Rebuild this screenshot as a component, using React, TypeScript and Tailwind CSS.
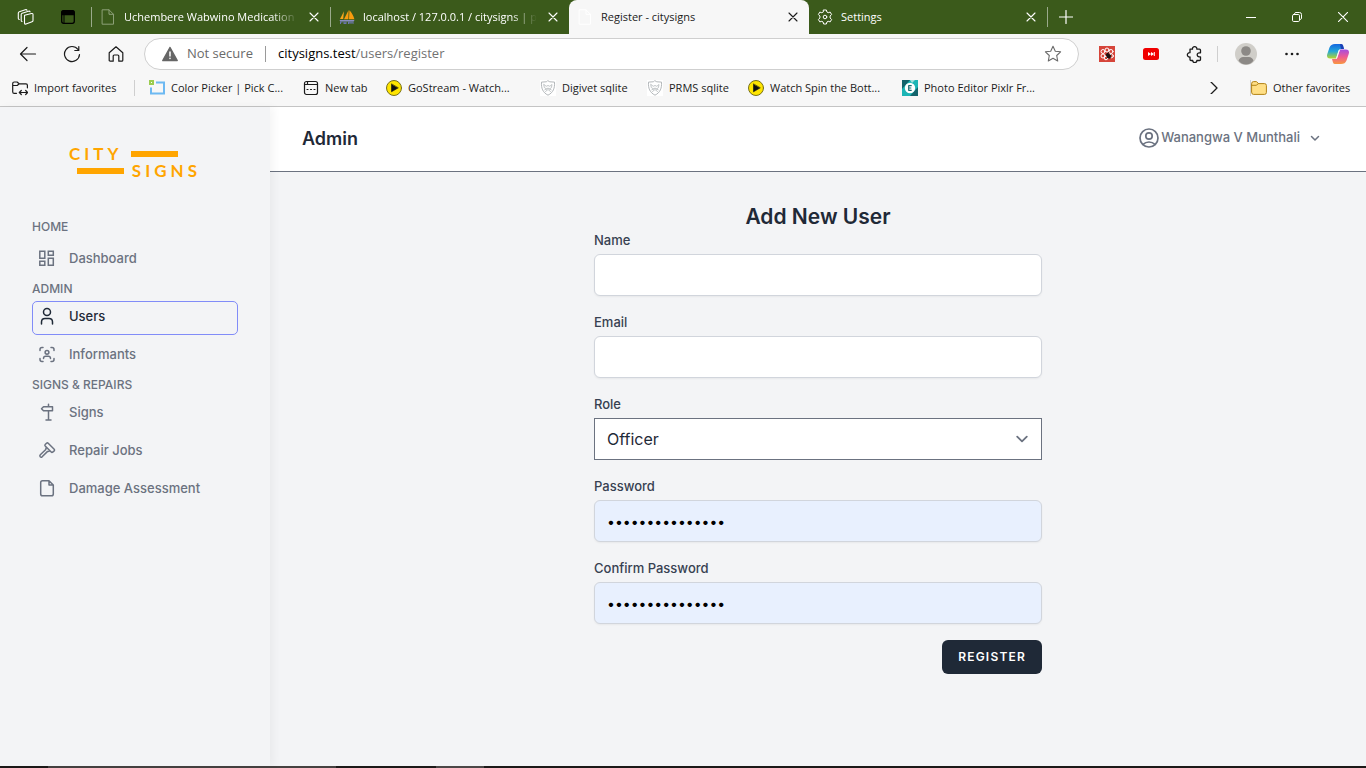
import type { ReactNode } from "react";

function Svg({ size = 20, box = 20, className = "", children }: { size?: number; box?: number; className?: string; children: ReactNode }) {
  return (
    <svg
      width={size}
      height={size}
      viewBox={`0 0 ${box} ${box}`}
      fill="none"
      stroke="currentColor"
      strokeWidth={1.5}
      strokeLinecap="round"
      strokeLinejoin="round"
      aria-hidden="true"
      className={`shrink-0 ${className}`}
    >
      {children}
    </svg>
  );
}

const PageIcon = ({ className = "" }: { className?: string }) => (
  <Svg size={16} box={16} className={className}>
    <path d="M2.5 .8H9l4.5 4.5v9.9h-11zM9 .8v4.5h4.5" strokeWidth="1" />
  </Svg>
);

const CloseIcon = () => (
  <Svg size={10} box={10}>
    <path d="M1 1l8 8M9 1l-8 8" strokeWidth="1.1" />
  </Svg>
);

const SailIcon = () => (
  <Svg size={16} box={16}>
    <g stroke="none">
      <path d="M5 2.2 1 10h3.2z" fill="#f8a51b" />
      <path d="M9.6 1 5 10.3h4.4z" fill="#f89c0e" />
      <path d="M10.4 1.2 10 10.3h5.4c-1-3.800-2.800-7-5-9.100z" fill="#f89c0e" />
      <path d="M.5 11h15l-.8 1.400H1.200z" fill="#8a8fc0" />
      <path d="M1 12.500h2.500v1H2v1.500H1zM4.500 12.500h1v1h1v-1h1v2.500h-3zM9 12.500h5.500v2.500h-1v-1.500h-1V15h-1v-1.500h-1V15H9z" fill="#6c78af" />
    </g>
  </Svg>
);

const GearIcon = () => (
  <Svg size={16} box={16}>
    <path
      d="M6.600 1h2.800l.5 2 1.300.7 2-.6 1.400 2.400-1.500 1.500v2l1.500 1.500-1.400 2.400-2-.6-1.300.7-.5 2H6.600l-.5-2-1.300-.7-2 .6-1.400-2.400L2.900 9V7L1.400 5.500l1.400-2.400 2 .6L6.100 3z"
      strokeWidth="1"
    />
    <circle cx="8" cy="8" r="1.800" strokeWidth="1" />
  </Svg>
);

const PlayIcon = () => (
  <Svg size={16} box={16}>
    <circle cx="8" cy="8" r="7.500" fill="#ffe500" stroke="#77701c" strokeWidth="1" />
    <path d="M5.500 4.200v7.600L12 8z" fill="#111" stroke="#111" strokeWidth=".6" />
  </Svg>
);

const ShieldIcon = () => (
  <Svg size={16} box={16} className="bg-white text-[#b3b7ba]">
    <path d="M8 .8l1.800 1 4.700.3c.4 6-1.200 10.400-6.500 13.100C2.700 12.500 1.100 8.100 1.500 2.100l4.700-.3z" strokeWidth="1" />
    <path d="M4 4.500l2.200 1.800L8 5.500l1.800.8L12 4.500l-.6 3.200L9.500 9 8 8l-1.500 1-1.900-1.300zM5.500 11.500L8 9.500l2.500 2M4.800 9.800l2-1M11.200 9.800l-2-1" strokeWidth=".8" />
  </Svg>
);

function Tab({ icon, title, active, fade }: { icon: ReactNode; title: string; active?: boolean; fade?: boolean }) {
  return (
    <div
      className={
        active
          ? "flex h-full w-60 items-center gap-2 rounded-t-lg bg-[#f7f7f7] px-2 text-[#1b1b1b]"
          : "flex h-full w-[238px] items-center gap-2 px-2 text-white"
      }
    >
      {icon}
      <span className={fade ? "min-w-0 flex-1 whitespace-nowrap [mask-image:linear-gradient(to_right,black_85%,transparent)]" : "min-w-0 flex-1 whitespace-nowrap"}>
        {title}
      </span>
      <button type="button" aria-label={`Close ${title}`} className="flex size-4 items-center justify-center">
        <CloseIcon />
      </button>
    </div>
  );
}

const Divider = () => <span className="h-5 w-px shrink-0 bg-[#9aaa8b]" />;

function TitleBar() {
  const control = "flex h-full w-[46px] items-center justify-center";
  return (
    <div className="flex h-[34px] items-center bg-[#3b5a1b] text-[11px] text-white">
      <div className="flex flex-1 items-center self-stretch">
        <div className="flex w-[91px] items-center pl-[5px]">
          <button type="button" aria-label="Workspaces" className="flex w-[42px] justify-center">
            <Svg size={18} box={18}>
              <path d="M7.500 7.300 14.500 5.500q1.500-.3 1.500 1v6q0 1-1 1.300l-6 2.200q-1.500.4-1.500-1zM5 13.500q-.8-.2-.8-1.300V6.500q0-1 1-1.300l6.300-2q1.300-.3 1.600.6M2.300 11.500q-1-.2-1-1.300V5q0-1 1-1.300l6-2q1.300-.3 1.700.6" strokeWidth="1.100" />
            </Svg>
          </button>
          <button type="button" aria-label="Tab actions" className="flex w-[42px] justify-center text-black">
            <Svg size={16} box={16}>
              <rect x="1.700" y="1.700" width="12.600" height="12.600" rx="2" strokeWidth="1.300" />
              <path d="M2 3.200q0-1.200 1.200-1.200h9.600q1.200 0 1.200 1.200V5.500H2z" fill="#000" />
              <path d="M4 5v9" strokeWidth="1" />
            </Svg>
          </button>
        </div>
        <Divider />
        <Tab icon={<PageIcon className="text-[#8da078]" />} title="Uchembere Wabwino Medication" fade />
        <Divider />
        <Tab icon={<SailIcon />} title="localhost / 127.0.0.1 / citysigns | p" fade />
        <Tab icon={<PageIcon className="text-white" />} title="Register - citysigns" active />
        <Tab icon={<GearIcon />} title="Settings" />
        <Divider />
        <button type="button" aria-label="New tab" className="flex w-9 justify-center">
          <Svg size={14} box={14}>
            <path d="M7 .5v13M.5 7h13" strokeWidth="1.200" />
          </Svg>
        </button>
      </div>
      <button type="button" aria-label="Minimize" className={control}>
        <Svg size={10} box={10}><path d="M0 5.500h10" strokeWidth="1" /></Svg>
      </button>
      <button type="button" aria-label="Restore" className={control}>
        <Svg size={10} box={10}><path d="M2.500 1.500Q2.800.5 4 .5h3.500q2 0 2 2V6q0 1-1 1.500" strokeWidth="1" /><rect x=".5" y="2.500" width="7" height="7" rx="1.200" strokeWidth="1" /></Svg>
      </button>
      <button type="button" aria-label="Close window" className={control}>
        <Svg size={10} box={10}><path d="M0 0l10 10M10 0L0 10" strokeWidth="1.100" /></Svg>
      </button>
    </div>
  );
}

function Toolbar() {
  const slot = "flex w-11 shrink-0 items-center justify-center";
  return (
    <div className="flex h-10 items-center px-[6px] text-[#1b1b1b]">
      <button type="button" aria-label="Back" className={slot}>
        <Svg size={18} box={18}><path d="M1.500 9h15M8 2.500 1.500 9 8 15.500" strokeWidth="1.200" /></Svg>
      </button>
      <button type="button" aria-label="Refresh" className={slot}>
        <Svg size={18} box={18}><path d="M16.500 9.500A7.500 7.500 0 1 1 15 4.500M15.800 1.500v4h-4" strokeWidth="1.200" /></Svg>
      </button>
      <button type="button" aria-label="Home" className={slot}>
        <Svg size={18} box={18}><path d="M2.200 7.800 9 1.800l6.800 6v7.400q0 1-1 1h-3V11q0-1-1-1H7.200q-1 0-1 1v5.200h-3q-1 0-1-1z" strokeWidth="1.200" /></Svg>
      </button>
      <div className="mx-[6px] flex h-8 flex-1 items-center rounded-full border border-[#cfcfcf] bg-white px-4 text-[13px]">
        <Svg size={18} box={18}>
          <path d="M9 2.500 1.800 15.500h14.400z" fill="#666" stroke="#666" />
          <path d="M9 7v4M9 13.200v.3" stroke="#fff" />
        </Svg>
        <span className="ml-2 w-[68px] whitespace-nowrap text-[#6a6a6a]">Not secure</span>
        <span className="ml-[10px] mr-3 h-4 w-px bg-[#9a9a9a]" />
        <span className="flex-1 text-black">
          citysigns.test<span className="text-[#727272]">/users/register</span>
        </span>
        <button type="button" aria-label="Add to favorites" className="text-[#6a6a6a]">
          <Svg size={18} box={18}><path d="M9 1.200l2.300 5 5.300.6-3.900 3.700 1 5.500L9 13.300 4.300 16l1-5.500L1.400 6.800l5.300-.6z" strokeWidth="1.100" /></Svg>
        </button>
      </div>
      <button type="button" aria-label="Bug extension" className={slot}>
        <Svg size={16} box={16}>
          <path d="M0 0h16v16H0z" fill="#d6453a" stroke="none" />
          <g stroke="#fff" strokeWidth="1"><circle cx="8" cy="4" r="2" /><circle cx="4" cy="5.500" r="2" /><circle cx="12" cy="5.500" r="2" /><circle cx="4" cy="10" r="2" /><circle cx="12.500" cy="10" r="1.800" /><circle cx="7" cy="12" r="1.800" /></g>
          <path d="M7 8.500l3-2M8 12l4-3" stroke="#1c1110" strokeWidth="1" />
          <ellipse cx="9.500" cy="10" rx="2" ry="2.800" fill="#1c1110" stroke="none" transform="rotate(-40 9.500 10)" />
        </Svg>
      </button>
      <button type="button" aria-label="Video extension" className={slot}>
        <Svg size={16} box={16}><rect x="0" y="2" width="16" height="12" rx="2.500" fill="#f00000" stroke="none" /><path d="M5 6v4l3-2zM8 6v4l3-2z" fill="#fff" stroke="none" /><path d="M11.300 6v4" stroke="#fff" strokeWidth="1" strokeLinecap="butt" /></Svg>
      </button>
      <button type="button" aria-label="Extensions" className={slot}>
        <Svg size={18} box={18}><path d="M4 4.200h2.500a2.200 2.200 0 1 1 4.300 0H13.500q1 0 1 1v2.600h-1.300a2 2 0 1 0 0 4h1.300v2.700q0 1-1 1h-2.600a2.100 2.100 0 0 1-4.200 0H5q-1 0-1-1v-2.500a2.200 2.200 0 1 1 0-4.300z" strokeWidth="1.300" /></Svg>
      </button>
      <span className="h-4 w-px bg-[#cfcfcf]" />
      <button type="button" aria-label="Profile" className={`${slot} ml-[6px]`}>
        <Svg size={22} box={22}><circle cx="11" cy="11" r="11" fill="#d0cec9" stroke="none" /><circle cx="11" cy="8" r="4.800" fill="#8c8986" stroke="none" /><path d="M3.500 17.500Q5 14 8 14h6q3 0 4.500 3.500Q16 21.500 11 21.500T3.500 17.500z" fill="#8c8986" stroke="none" /></Svg>
      </button>
      <button type="button" aria-label="More" className={`${slot} ml-0.5`}>
        <Svg size={16} box={16}><g fill="currentColor" stroke="none"><circle cx="2.500" cy="8" r="1.300" /><circle cx="8" cy="8" r="1.300" /><circle cx="13.500" cy="8" r="1.300" /></g></Svg>
      </button>
      <button type="button" aria-label="Copilot" className={`${slot} ml-0.5`}>
        <Svg size={22} box={22}>
          <defs>
            <linearGradient id="cpBlue" x1="0" y1="0" x2="0" y2="1"><stop stopColor="#1466e0" /><stop offset=".5" stopColor="#22a7d8" /><stop offset="1" stopColor="#b8d62b" /></linearGradient>
            <linearGradient id="cpPink" x1="0" y1="0" x2="0" y2="1"><stop stopColor="#a44de0" /><stop offset=".5" stopColor="#ee5a94" /><stop offset="1" stopColor="#f9973f" /></linearGradient>
          </defs>
          <g stroke="none">
            <path d="M8 1h6q1.500 0 2 1.500L17 6h-3.500q-1.500 0-2 1.500L9 15.500H3q-4 0-2.700-4.500L2.500 4.500Q3.800 1 8 1z" fill="url(#cpBlue)" />
            <path d="M14 21H8q-1.500 0-2-1.500L5 16h3.500q1.500 0 2-1.500L13 6.500h6q4 0 2.700 4.500l-2.200 6.500Q18.200 21 14 21z" fill="url(#cpPink)" />
            <path d="M13 1.100q2.500-.3 3 1.400l1 3.500h-3z" fill="#1c3fb4" />
            <path d="M12.800 7 10 14.800q-.3.900-1 1.200L11.500 8q.3-.8 1.300-1z" fill="#f7f7f7" />
          </g>
        </Svg>
      </button>
    </div>
  );
}

function Bookmark({ icon, label, width }: { icon: ReactNode; label: string; width: string }) {
  return (
    <a href="#" className={`flex shrink-0 items-center gap-[6px] whitespace-nowrap ${width}`}>
      {icon}
      {label}
    </a>
  );
}

function BookmarksBar() {
  return (
    <div className="flex h-[33px] items-center border-b border-[#c4c4c4] pb-1 pl-3 pr-[14px] text-[11px] text-[#1b1b1b]">
      <Bookmark
        width="w-[122px]"
        label="Import favorites"
        icon={<Svg size={16} box={16}><path d="M4.500 13.300H2.300Q.7 13.300.7 11.700V3.500Q.7 2 2.300 2h2.800l2 1.800H14q1.400 0 1.400 1.500v2.500M.7 5.500h4.500l2-1.700M7.500 12.500h8M9.300 10.500l-2 2 2 2M13.700 10.500l2 2-2 2" strokeWidth="1.200" /></Svg>}
      />
      <span className="mr-[14px] h-4 w-px bg-[#cfcfcf]" />
      <Bookmark
        width="w-[154px]"
        label="Color Picker | Pick C..."
        icon={<Svg size={16} box={16}><path d="M7 2.500h8v11H2V7.500" stroke="#6db9f2" strokeWidth="2" strokeLinejoin="miter" strokeLinecap="butt" /><path d="M0 0h5v5H0z" fill="#9ccc50" stroke="none" /><path d="M2 2h1v1H2z" fill="#fff" stroke="none" /></Svg>}
      />
      <Bookmark
        width="w-[83px]"
        label="New tab"
        icon={<Svg size={16} box={16}><rect x="1.500" y="1.500" width="13" height="13" rx="2" strokeWidth="1.200" /><path d="M4.500 1.500v3M1.500 4.500h13M4 9.500h1M7.500 9.500h1M11 9.500h1" strokeWidth="1.200" /></Svg>}
      />
      <Bookmark width="w-[154px]" label="GoStream - Watch..." icon={<PlayIcon />} />
      <Bookmark width="w-[107px]" label="Digivet sqlite" icon={<ShieldIcon />} />
      <Bookmark width="w-[101px]" label="PRMS sqlite" icon={<ShieldIcon />} />
      <Bookmark width="w-[154px]" label="Watch Spin the Bott..." icon={<PlayIcon />} />
      <Bookmark
        width="w-[150px]"
        label="Photo Editor Pixlr Fr..."
        icon={<Svg size={16} box={16}><g stroke="none"><path d="M0 0h16v16H0z" fill="#1cb5b5" /><path d="M0 0h8L0 9zM16 7v9H8z" fill="#14646c" /><path d="M8 0l5 0-3 3z" fill="#a0e0dc" /><circle cx="8" cy="8" r="5.200" fill="#fff" /></g><path d="M9.700 5.700H6.700v4.600h3M6.700 8h2.600" stroke="#176a70" strokeWidth="1.200" strokeLinecap="butt" /></Svg>}
      />
      <button type="button" aria-label="More bookmarks" className="ml-auto mr-[30px] flex">
        <Svg size={12} box={12}><path d="M3 0l6 6-6 6" strokeWidth="1.300" /></Svg>
      </button>
      <span className="h-4 w-px bg-[#cfcfcf]" />
      <Bookmark
        width="w-[101px]"
        label="Other favorites"
        icon={<Svg size={16} box={16}><path d="M.6 3.500Q.6 1.600 2.500 1.600h3l2 2h6q1.900 0 1.900 1.900v7q0 1.900-1.900 1.900h-11Q.6 14.400.6 12.500z" fill="#ffdf86" stroke="#b18217" strokeWidth="1" /><path d="M.6 5.300h4.600l2.300-1.700" stroke="#b18217" strokeWidth="1" /></Svg>}
      />
    </div>
  );
}

function Logo() {
  return (
    <div className="mx-auto w-[132px] font-['Lato',sans-serif] text-[17px] font-bold leading-[17px] tracking-[4px] text-[#ffa500]">
      <div className="flex items-center gap-1">
        <span className="w-[58px]">CITY</span>
        <span className="h-[6px] w-[47px] bg-[#ffa500]" />
      </div>
      <div className="flex items-center gap-2 pl-2">
        <span className="h-[6px] w-[47px] bg-[#ffa500]" />
        <span>SIGNS</span>
      </div>
    </div>
  );
}

function NavItem({ icon, label, active }: { icon: ReactNode; label: string; active?: boolean }) {
  return (
    <a
      href="#"
      aria-current={active ? "page" : undefined}
      className={
        active
          ? "flex h-[34px] items-start gap-3 rounded-[5px] border border-[#818cf8] px-1 pt-1 text-[#1f2937]"
          : "flex h-[34px] items-start gap-3 rounded-[5px] border border-transparent px-1 pt-1 text-[#6b7280]"
      }
    >
      {icon}
      {label}
    </a>
  );
}

const NavHeading = ({ children }: { children: ReactNode }) => (
  <h3 className="text-[12px] font-medium leading-4 text-[#6b7280]">{children}</h3>
);

function Sidebar() {
  return (
    <aside className="z-10 w-[270px] shrink-0 bg-[#f3f4f6] px-8 pt-[38px] shadow-[4px_0_8px_rgba(0,0,0,0.04)]">
      <Logo />
      <nav className="mt-10 flex flex-col gap-1 text-[13px] font-medium leading-5">
        <NavHeading>HOME</NavHeading>
        <div className="mt-1">
          <NavItem label="Dashboard" icon={<Svg><path d="M2.800 3.300h5v7h-5zM2.800 13.300h5v4h-5zM11.300 3.300h5v4h-5zM11.300 10.300h5v7h-5z" strokeLinejoin="miter" /></Svg>} />
        </div>
        <NavHeading>ADMIN</NavHeading>
        <NavItem active label="Users" icon={<Svg><circle cx="10" cy="6" r="3.500" /><path d="M4.500 18v-2q0-3.500 3.500-3.500h4q3.500 0 3.500 3.500v2" /></Svg>} />
        <NavItem label="Informants" icon={<Svg><path d="M3 6.500v-1Q3 3.500 5 3.500h1M14 3.500h1q2 0 2 2v1M17 14.500v1q0 2-2 2h-1M6 17.500H5q-2 0-2-2v-1M6.500 14.500q0-2.200 2.200-2.200h2.600q2.200 0 2.200 2.200" /><circle cx="10" cy="8.300" r="1.900" /></Svg>} />
        <NavHeading>SIGNS &amp; REPAIRS</NavHeading>
        <NavItem label="Signs" icon={<Svg><path d="M11.500 2.300v2.200M6.500 4.800h9v4h-9l-2-2zM11.500 9v9M9 18h5" /></Svg>} />
        <NavItem label="Repair Jobs" icon={<Svg><path d="M9.500 3.300q.9-.8 1.700 0l6 6q.8.800 0 1.600l-1.500 1.200q-.8.600-1.500-.1l-6-6q-.7-.8 0-1.500zM9 8l-.2 1.500-5.500 5.300q-.9 1-.1 1.900.9.900 1.900.1l5.500-5.400 1.500-.2" /></Svg>} />
        <NavItem label="Damage Assessment" icon={<Svg><path d="M12 2.800H5.500q-1.800 0-1.800 1.800v11.300q0 1.800 1.800 1.800h9q1.800 0 1.800-1.800V7zM12 2.800V7h4.300" /></Svg>} />
      </nav>
    </aside>
  );
}

function Field({ id, label, type }: { id: string; label: string; type: string }) {
  return (
    <div>
      <label htmlFor={id} className="block text-[13px] font-medium leading-5 text-[#374151]">{label}</label>
      <input
        id={id}
        type={type}
        defaultValue={type === "password" ? "citysigns-admin" : ""}
        className={
          type === "password"
            ? "mt-1 block h-[42px] w-full rounded-md border border-gray-300 bg-[#e8f0fe] px-3 text-[14px] text-black shadow-xs"
            : "mt-1 block h-[42px] w-full rounded-md border border-gray-300 bg-white px-3 text-[14px] shadow-xs"
        }
      />
    </div>
  );
}

function RegisterForm() {
  return (
    <form className="mx-auto flex w-full max-w-[448px] flex-col gap-4" onSubmit={(e) => e.preventDefault()}>
      <div>
        <h2 className="text-center text-[21px] font-semibold leading-[26px] text-[#1f2937]">Add New User</h2>
        <Field id="name" label="Name" type="text" />
      </div>
      <Field id="email" label="Email" type="email" />
      <div>
        <label htmlFor="role" className="block text-[13px] font-medium leading-5 text-[#374151]">Role</label>
        <div className="relative mt-1">
          <select id="role" className="block h-[42px] w-full appearance-none border border-[#6b7280] bg-white px-3 text-[16px] text-[#1f2937]">
            <option>Officer</option>
          </select>
          <Svg size={24} box={20} className="pointer-events-none absolute right-2 top-[9px] text-[#6b7280]">
            <path d="M6 8l4 4 4-4" />
          </Svg>
        </div>
      </div>
      <Field id="password" label="Password" type="password" />
      <Field id="confirm" label="Confirm Password" type="password" />
      <button type="submit" className="h-[34px] self-end rounded-md bg-[#1f2937] px-4 text-[12px] font-semibold tracking-widest text-white">
        REGISTER
      </button>
    </form>
  );
}

export default function App() {
  return (
    <div className="flex min-h-screen flex-col bg-[#f3f4f6] font-['Inter',sans-serif]">
      <div className="bg-[#f7f7f7] font-['Open_Sans',sans-serif]">
        <TitleBar />
        <Toolbar />
        <BookmarksBar />
      </div>
      <div className="flex flex-1">
        <Sidebar />
        <div className="flex min-w-0 flex-1 flex-col">
          <header className="flex h-[65px] items-center justify-between border-b border-[#6b7280] bg-white pb-0.5 pl-8 pr-[46px]">
            <h1 className="text-[18px] font-semibold text-[#1f2937]">Admin</h1>
            <button type="button" className="flex items-center gap-0.5 text-[13px] font-medium text-[#6b7280]">
              <Svg>
                <circle cx="10" cy="10" r="9" strokeWidth="1.700" />
                <circle cx="10" cy="8" r="3.200" strokeWidth="1.700" />
                <path d="M4 16.300q2.500-2.300 6-2.300t6 2.300" strokeWidth="1.700" />
              </Svg>
              Wanangwa V Munthali
              <Svg size={10} box={10} className="ml-2"><path d="M1.500 3.500 5 7l3.500-3.500" /></Svg>
            </button>
          </header>
          <main className="flex-1 px-6 py-8">
            <RegisterForm />
          </main>
        </div>
      </div>
      <div className="flex h-0.5 bg-[#1c1918]">
        <span className="ml-12 w-72 bg-[#454140]" />
        <span className="ml-[100px] w-12 bg-[#4b4747]" />
      </div>
    </div>
  );
}
